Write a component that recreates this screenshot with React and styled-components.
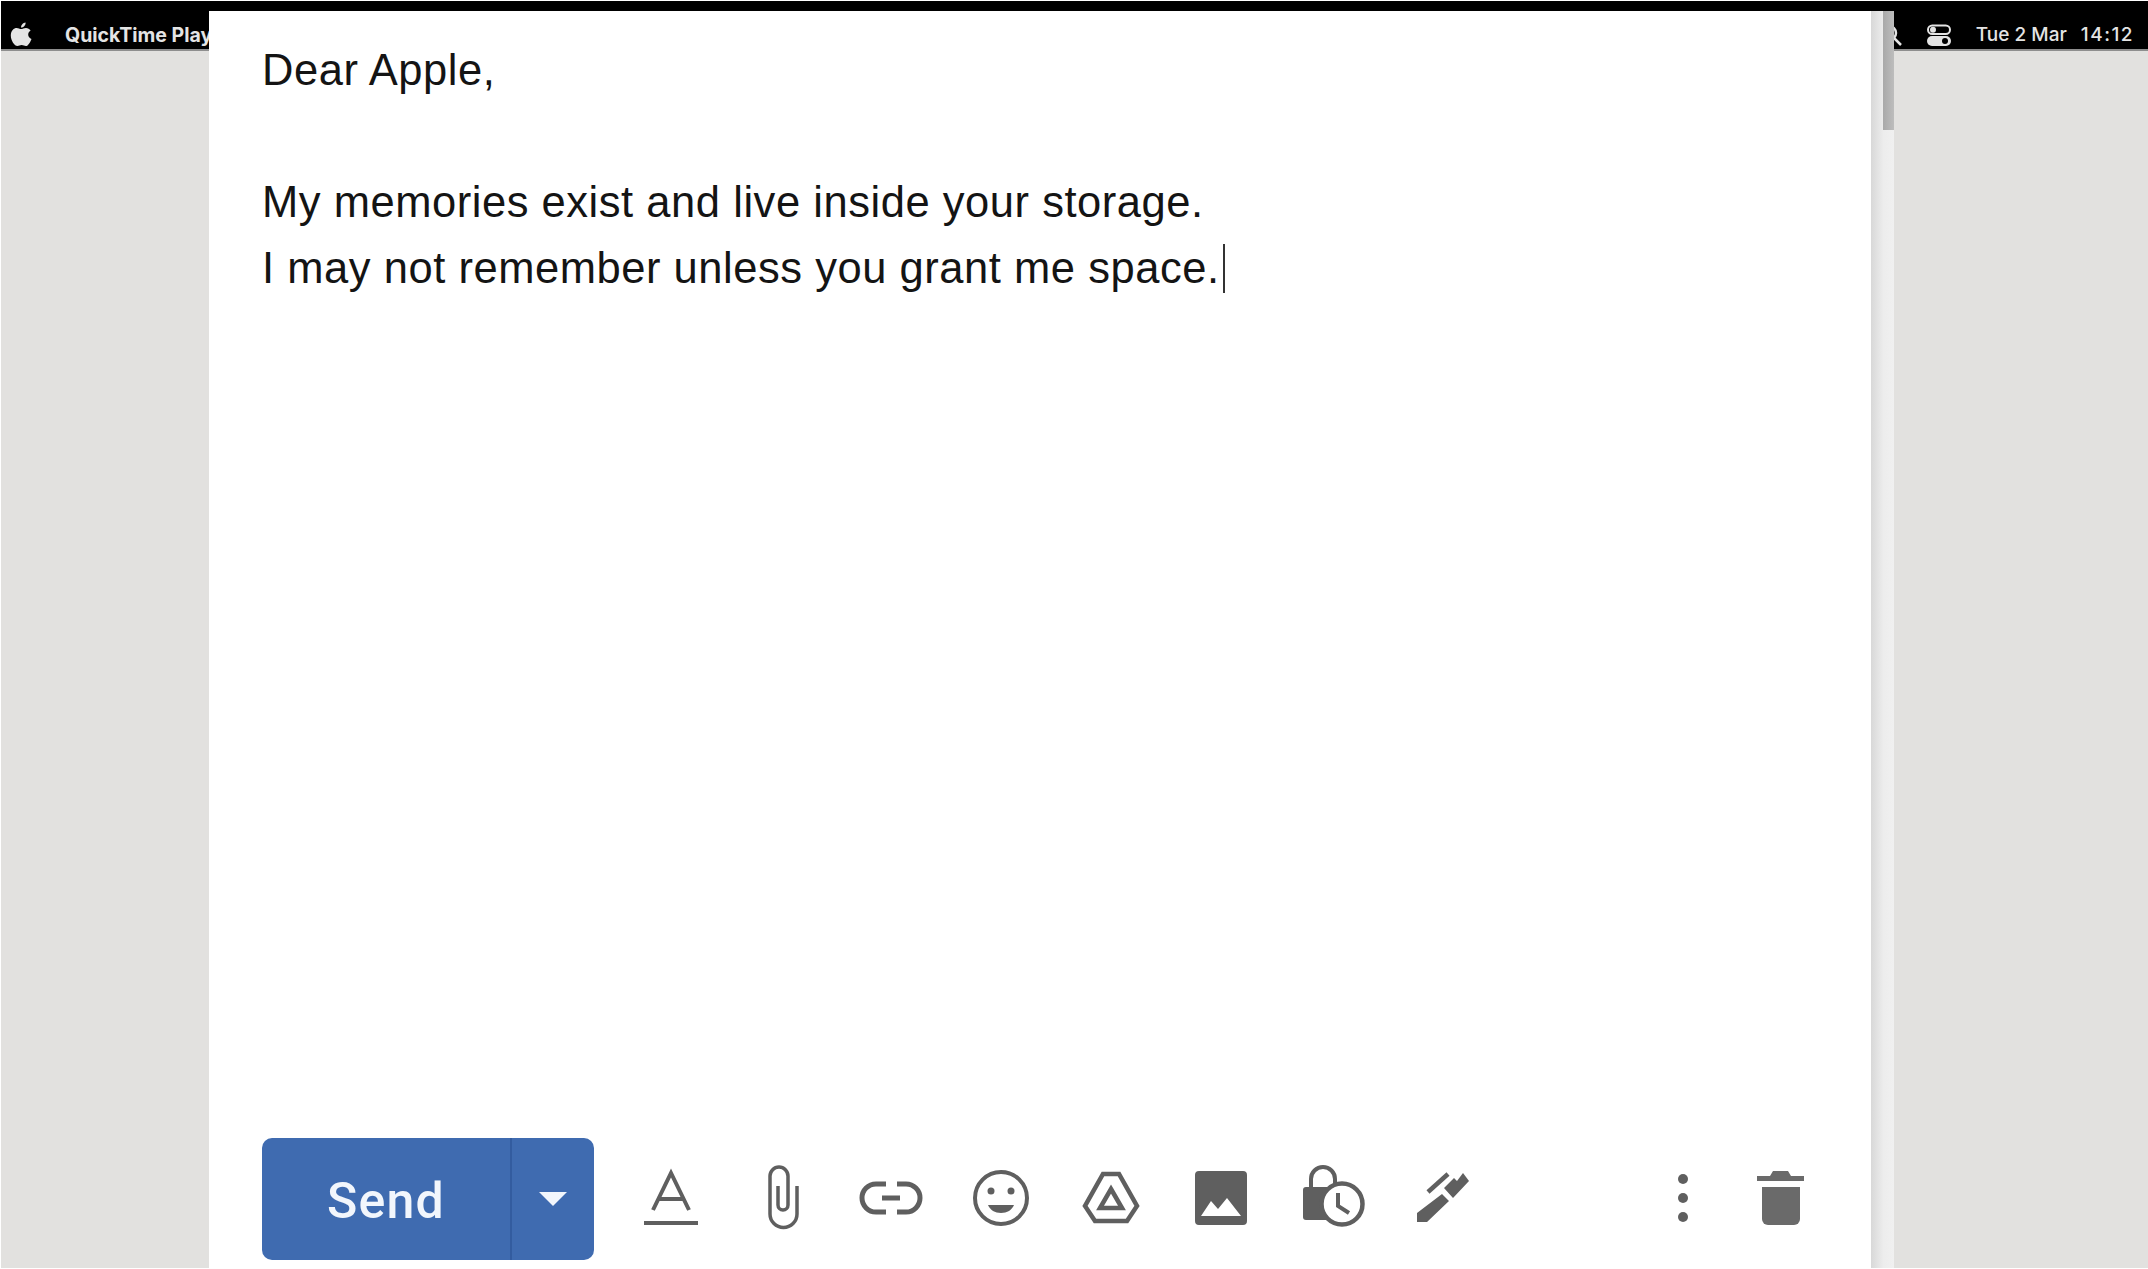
import React from 'react'
import styled, { createGlobalStyle } from 'styled-components'

const GlobalStyle = createGlobalStyle`
  html, body {
    margin: 0;
    padding: 0;
    background: #fff;
  }
`

const Desktop = styled.div`
  position: relative;
  width: 2148px;
  height: 1269px;
  box-sizing: border-box;
  overflow: hidden;
  border: solid #fff;
  border-width: 1px 0 1px 1px;
  background: #e2e1df;
  font-family: "Liberation Sans", Arial, sans-serif;
`

const MenuBar = styled.div`
  height: 50px;
  box-sizing: border-box;
  padding: 19px 14px 0 9px;
  display: flex;
  align-items: center;
  justify-content: space-between;
  background: #000;
  border-bottom: 2px solid #8e8e8e;
  color: #e4e4e4;
`

const MenuLeft = styled.div`
  display: flex;
  align-items: center;
  gap: 33px;
`

const MenuRight = styled.div`
  display: flex;
  align-items: center;
  gap: 25px;
`

const AppName = styled.span`
  font-family: Inter, "Liberation Sans", sans-serif;
  font-size: 19.5px;
  font-weight: 700;
`

const Clock = styled.div`
  display: flex;
  gap: 14px;
  font-family: Inter, "Liberation Sans", sans-serif;
  font-size: 19px;
  font-weight: 500;
`

const ClockTime = styled.span`
  letter-spacing: 1.5px;
`

const ComposeWindow = styled.div`
  position: absolute;
  left: 208px;
  top: 10px;
  bottom: 0;
  width: 1685px;
  display: flex;
  background: #fff;
`

const ComposeBody = styled.div`
  flex: 1;
  display: flex;
  flex-direction: column;
  justify-content: space-between;
  padding: 26px 67px 8px 53px;
`

const Letter = styled.div`
  font-size: 43.5px;
  line-height: 66px;
  color: #141414;
  letter-spacing: 0.54px;
`

const Line = styled.div`
  min-height: 66px;
`

const Caret = styled.span`
  display: inline-block;
  width: 2px;
  height: 49px;
  margin-left: 3px;
  vertical-align: -10px;
  background: #333;
`

const Toolbar = styled.div`
  display: flex;
  align-items: center;
`

const SendButton = styled.div`
  width: 332px;
  height: 122px;
  flex: none;
  display: flex;
  border-radius: 10px;
  background: #3f6bb0;
  color: #f2f6fc;
  margin-right: 49px;
`

const SendLabel = styled.div`
  width: 250px;
  box-sizing: border-box;
  padding-top: 3px;
  display: flex;
  align-items: center;
  justify-content: center;
  border-right: 2px solid #335c9f;
  font-family: Roboto, "Open Sans", sans-serif;
  font-size: 50px;
  font-weight: 500;
  letter-spacing: 1.2px;
`

const SendArrow = styled.div`
  flex: 1;
  display: flex;
  align-items: center;
  justify-content: center;
`

const Tools = styled.div`
  flex: 1;
  display: flex;
  align-items: center;
  gap: 54px;
  margin-bottom: 2px;
`

const ToolSlot = styled.svg`
  width: 56px;
  height: 56px;
  flex: none;
  overflow: visible;
  color: #5f5f5f;
`

const ToolsEnd = styled.div`
  display: flex;
  align-items: center;
  gap: 68px;
  margin-bottom: 2px;
`

const Scrollbar = styled.div`
  width: 23px;
  flex: none;
  display: flex;
  justify-content: flex-end;
  background: linear-gradient(to right, #d8d8d8, #ededed 55%, #f0f0f0);
`

const ScrollThumb = styled.div`
  width: 11px;
  height: 119px;
  background: linear-gradient(to right, #a9a9a9, #bdbdbd);
`

const Icon = ({ children }) => (
  <ToolSlot viewBox="0 0 56 56" fill="none" stroke="currentColor" strokeWidth="4">
    {children}
  </ToolSlot>
)

const App = () => (
  <>
    <GlobalStyle />
    <Desktop>
      <MenuBar>
        <MenuLeft>
          <svg width="22" height="26" viewBox="0 0 22 26" fill="#e4e4e4">
            <path d="M11 7c1.5 0 2.8-1.1 5-1.1 1.8 0 3.6.9 4.6 2.5-3.6 2-3 7 .9 8.5-1 2.8-3.3 7.1-5.6 7.1-1.5 0-2.5-1-4.2-1-1.8 0-2.8 1-4.2 1C4.5 24 .8 18.5.8 13.4.8 8.5 3.9 5.900 6.7 5.900c1.700 0 3 1.100 4.300 1.100z" />
            <path d="M11 5.600C10.900 3 13 .7 15.600.4c.2 2.700-2 5.200-4.600 5.200z" />
          </svg>
          <AppName>QuickTime Player</AppName>
        </MenuLeft>
        <MenuRight>
          <svg width="22" height="22" viewBox="0 0 22 22" fill="none" stroke="#e4e4e4" strokeWidth="2.5">
            <circle cx="9" cy="9" r="7" />
            <path d="M14 14l7 7" />
          </svg>
          <svg width="24" height="22" viewBox="0 0 24 22">
            <rect x="1" y="1.5" width="22" height="8.5" rx="4.25" fill="none" stroke="#e4e4e4" strokeWidth="2" />
            <circle cx="6" cy="5.75" r="3" fill="#e4e4e4" />
            <rect x="0" y="12" width="24" height="10" rx="5" fill="#e4e4e4" />
            <circle cx="18" cy="17" r="3" fill="#000" />
          </svg>
          <Clock>
            <span>Tue 2 Mar</span>
            <ClockTime>14:12</ClockTime>
          </Clock>
        </MenuRight>
      </MenuBar>

      <ComposeWindow>
        <ComposeBody>
          <Letter>
            <Line>Dear Apple,</Line>
            <Line />
            <Line>My memories exist and live inside your storage.</Line>
            <Line>I may not remember unless you grant me space.<Caret /></Line>
          </Letter>

          <Toolbar>
            <SendButton>
              <SendLabel>Send</SendLabel>
              <SendArrow>
                <svg width="28" height="14" viewBox="0 0 28 14" fill="#f2f6fc">
                  <path d="M0 0h28L14 14z" />
                </svg>
              </SendArrow>
            </SendButton>

            <Tools>
              <Icon>
                <path d="M10 40 28 3l18 37M16 29h24" />
                <path d="M1 53h54" />
              </Icon>
              <Icon>
                <path d="M44 16v28a13.5 13.5 0 0 1-27 0V6a9 9 0 0 1 18 0v29a5 5 0 0 1-10 0V16" strokeWidth="3.5" />
              </Icon>
              <Icon>
                <path d="M23 14H13a14 14 0 0 0 0 28h10M34 14h9a14 14 0 0 1 0 28h-9M19 28h18" strokeWidth="5" />
              </Icon>
              <Icon>
                <circle cx="28" cy="28" r="26" />
                <circle cx="18" cy="21" r="3.5" fill="currentColor" stroke="none" />
                <circle cx="38" cy="21" r="3.5" fill="currentColor" stroke="none" />
                <path d="M15 35h26c-2 5-7 8-13 8s-11-3-13-8z" fill="currentColor" stroke="none" />
              </Icon>
              <Icon>
                <path d="M20 4h16l18 32-10 15H12L2 36z" strokeWidth="4.5" />
                <path d="M28 19l11 19H17z" strokeWidth="4.5" />
              </Icon>
              <Icon>
                <path fillRule="evenodd" stroke="none" fill="currentColor" d="M6 1h44a4 4 0 0 1 4 4v46a4 4 0 0 1-4 4H6a4 4 0 0 1-4-4V5a4 4 0 0 1 4-4zM8 46h40L34 28l-9 11-7-8z" />
              </Icon>
              <Icon>
                <path d="M8 20V9a12 12 0 0 1 24 0v11" />
                <rect x="0" y="17" width="36" height="33" rx="3" fill="currentColor" stroke="none" />
                <circle cx="39" cy="34" r="20.5" fill="#fff" strokeWidth="4.5" />
                <path d="M35 23v13l11 7" />
              </Icon>
              <Icon>
                <path d="M15 22 35 4" strokeWidth="4.5" />
                <path stroke="none" fill="currentColor" d="M31 18l10-10 3 3 6-8 6 8-16 17zM4 43l25-19 7 7-22 21H4z" />
              </Icon>
            </Tools>

            <ToolsEnd>
              <svg width="12" height="50" viewBox="0 0 12 50" fill="#5f5f5f">
                <circle cx="6" cy="6" r="5" />
                <circle cx="6" cy="25" r="5" />
                <circle cx="6" cy="44" r="5" />
              </svg>
              <svg width="47" height="54" viewBox="0 0 47 54" fill="#6a6a6a">
                <path d="M0 5h13l3-5h15l3 5h13v5H0z" />
                <path d="M5 16h38v32a6 6 0 0 1-6 6H11a6 6 0 0 1-6-6z" />
              </svg>
            </ToolsEnd>
          </Toolbar>
        </ComposeBody>
        <Scrollbar>
          <ScrollThumb />
        </Scrollbar>
      </ComposeWindow>
    </Desktop>
  </>
)

export default App
